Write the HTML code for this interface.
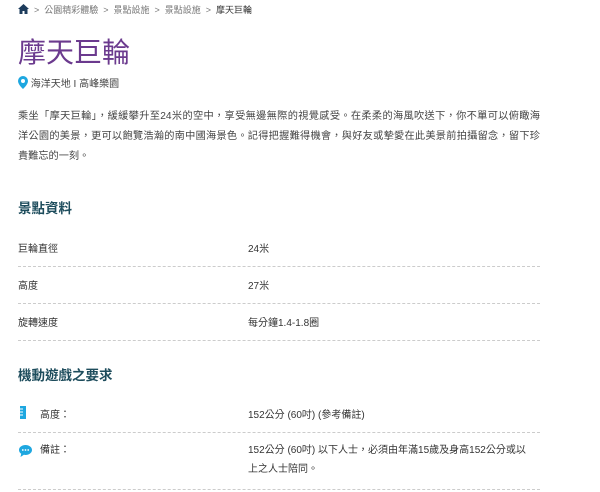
<!DOCTYPE html>
<html><head><meta charset="utf-8"><style>
*{margin:0;padding:0;box-sizing:border-box}
body{width:600px;height:492px;overflow:hidden;background:#fff;font-family:"Liberation Sans","Noto Sans CJK TC",sans-serif;color:#333;position:relative}
.a{position:absolute;white-space:nowrap}
.bc{top:3px;left:18px;font-size:9px;color:#777;line-height:14px}
.bc b{font-weight:normal;color:#333}
.t{top:36px;left:18px;font-size:28px;color:#6b3a8e;line-height:34px}
.loc{top:76px;left:18px;font-size:10px;color:#444;line-height:14px}
.p{position:absolute;top:107px;left:18px;width:522px;font-size:10.2px;line-height:20px;color:#444}
.p div{white-space:nowrap;text-align:justify;text-align-last:justify}
.p div.l{text-align-last:left}
.h{left:18px;font-size:13.5px;color:#1d4c5c;font-weight:bold}
.r{position:absolute;left:18px;width:522px;border-bottom:1px dashed #ccc;font-size:10px;color:#333}
.r span{position:absolute;left:230px}
</style></head><body>
<div class="a bc"><svg width="11" height="10" viewBox="0 0 11 10" style="vertical-align:-1px"><path d="M5.5 0L0 5h1.5v5h3V7h2v3h3V5H11z" fill="#1d3c5c"/></svg> &nbsp;&gt;&nbsp; 公園精彩體驗 &nbsp;&gt;&nbsp; 景點設施 &nbsp;&gt;&nbsp; 景點設施 &nbsp;&gt;&nbsp; <b>摩天巨輪</b></div>
<div class="a t">摩天巨輪</div>
<div class="a loc"><svg width="10" height="13" viewBox="0 0 10 13" style="vertical-align:-2px"><path d="M5 0a5 5 0 0 0-5 5c0 3.5 5 8 5 8s5-4.5 5-8a5 5 0 0 0-5-5zm0 7a2 2 0 1 1 0-4 2 2 0 0 1 0 4z" fill="#1ea7e0"/></svg> 海洋天地 I 高峰樂園</div>
<div class="p"><div>乘坐「摩天巨輪」，緩緩攀升至24米的空中，享受無邊無際的視覺感受。在柔柔的海風吹送下，你不單可以俯瞰海</div><div>洋公園的美景，更可以飽覽浩瀚的南中國海景色。記得把握難得機會，與好友或摯愛在此美景前拍攝留念，留下珍</div><div class="l">貴難忘的一刻。</div></div>
<div class="a h" style="top:197px">景點資料</div>
<div class="r" style="top:240px;height:27px">巨輪直徑<span>24米</span></div>
<div class="r" style="top:277px;height:27px">高度<span>27米</span></div>
<div class="r" style="top:314px;height:27px">旋轉速度<span>每分鐘1.4-1.8圈</span></div>
<div class="a h" style="top:364px">機動遊戲之要求</div>
<div class="r" style="top:406px;height:27px"><svg width="6" height="13" style="position:absolute;left:2px;top:0" viewBox="0 0 6 13"><rect width="6" height="13" fill="#1ea7e0"/><path d="M0 3h3M0 6h3M0 9h3" stroke="#fff"/></svg><i style="font-style:normal;position:absolute;left:22px">高度：</i><span>152公分 (60吋) (參考備註)</span></div>
<div class="r" style="top:443px;height:47px;line-height:19px"><svg width="13" height="12" style="position:absolute;left:1px;top:2px" viewBox="0 0 13 12"><path d="M6.5 0C2.9 0 0 2.2 0 5c0 1.5.8 2.8 2.2 3.7L1.5 12l3.4-2.2c.5.1 1 .2 1.6.2 3.6 0 6.5-2.2 6.5-5S10.1 0 6.5 0z" fill="#1ea7e0"/><circle cx="3.8" cy="5" r=".9" fill="#fff"/><circle cx="6.5" cy="5" r=".9" fill="#fff"/><circle cx="9.2" cy="5" r=".9" fill="#fff"/></svg><i style="font-style:normal;position:absolute;left:22px;top:-2px">備註：</i><span style="top:-2px;white-space:normal;width:282px">152公分 (60吋) 以下人士，必須由年滿15歲及身高152公分或以上之人士陪同。</span></div>
</body></html>
